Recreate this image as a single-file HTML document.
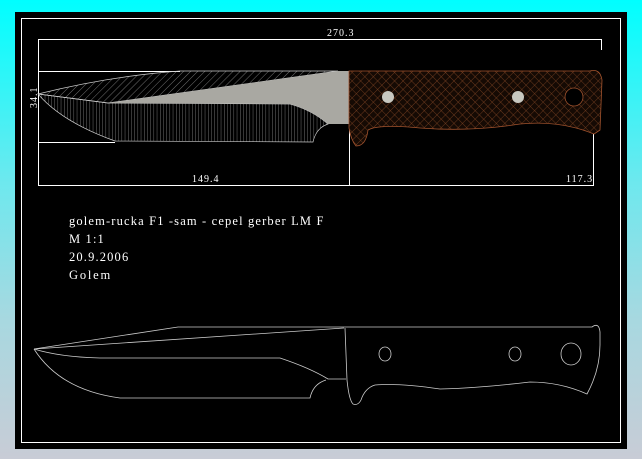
<!DOCTYPE html>
<html><head><meta charset="utf-8"><style>
html,body{margin:0;padding:0;width:642px;height:459px;overflow:hidden;background:linear-gradient(#00ffff 0%,#6ee8ee 40%,#a8d8e0 70%,#c8ccd6 100%);}
svg{position:absolute;left:0;top:0}
text{font-family:"Liberation Serif",serif;fill:#fff}
</style></head><body>
<svg width="642" height="459" viewBox="0 0 642 459">
<defs>
<pattern id="diag" width="5" height="5" patternUnits="userSpaceOnUse" patternTransform="rotate(45)">
<line x1="0" y1="0" x2="0" y2="5" stroke="#bbb" stroke-width="0.6"/></pattern>
<pattern id="vert" width="3.2" height="5" patternUnits="userSpaceOnUse">
<line x1="0" y1="0" x2="0" y2="5" stroke="#bbb" stroke-width="0.6"/></pattern>
<pattern id="cross" width="6" height="6" patternUnits="userSpaceOnUse" patternTransform="rotate(45)">
<rect width="6" height="6" fill="#150a04"/>
<line x1="0" y1="0" x2="0" y2="6" stroke="#8a4a26" stroke-width="0.7"/>
<line x1="0" y1="0" x2="6" y2="0" stroke="#8a4a26" stroke-width="0.7"/></pattern>
</defs>
<rect x="15" y="12" width="612" height="437" fill="#000"/>
<rect x="21.5" y="18.5" width="599" height="424" fill="none" stroke="#fff" stroke-width="1"/>
<g stroke="#fff" stroke-width="1" fill="none">
<line x1="38" y1="39.5" x2="602" y2="39.5"/>
<line x1="38.5" y1="39" x2="38.5" y2="186"/>
<line x1="601.5" y1="39" x2="601.5" y2="50"/>
<line x1="38" y1="185.5" x2="593" y2="185.5"/>
<line x1="349.5" y1="130" x2="349.5" y2="186"/>
<line x1="593.5" y1="130" x2="593.5" y2="186"/>
<line x1="38" y1="71.5" x2="180" y2="71.5"/>
<line x1="38" y1="142.5" x2="115" y2="142.5"/>
</g>
<text x="327" y="36" font-size="10" letter-spacing="1">270.3</text>
<text x="192" y="182" font-size="10" letter-spacing="1">149.4</text>
<text x="566" y="182" font-size="10" letter-spacing="1">117.3</text>
<text x="37" y="108" font-size="10" letter-spacing="1" transform="rotate(-90 37 108)">34.1</text>
<path d="M38,94 Q110,76 180,71 L338,71 L108,103 Z" fill="url(#diag)" stroke="#ccc" stroke-width="0.7"/>
<path d="M38,94 L108,103 L290,104 Q312,110 328,124 Q316,128 313,142 L115,141 Q62,122 38,94 Z" fill="url(#vert)" stroke="#ccc" stroke-width="0.7"/>
<path d="M108,103 L338,71 L349,71 L349,124 L328,124 Q312,110 290,104 Z" fill="#a9a8a2"/>
<path d="M349,71 L590,71 Q600,68 602,80 L600,130 L594,134 Q560,120 520,124 Q470,132 420,128 Q378,124 368,130 Q366,146 356,146 Q351,140 349,128 Z" fill="url(#cross)" stroke="#a0522d" stroke-width="0.8"/>
<circle cx="388" cy="97" r="6" fill="#c8c8c0"/>
<circle cx="518" cy="97" r="6" fill="#c8c8c0"/>
<circle cx="574" cy="97" r="9" fill="#000" stroke="#a0522d" stroke-width="0.8"/>
<text x="69" y="225" font-size="12.5" letter-spacing="1.15">golem-rucka F1 -sam - cepel gerber LM F</text>
<text x="69" y="243" font-size="12.5" letter-spacing="1.15">M  1:1</text>
<text x="69" y="261" font-size="12.5" letter-spacing="1.15">20.9.2006</text>
<text x="69" y="279" font-size="12.5" letter-spacing="1.8">Golem</text>
<g stroke="#ccc" stroke-width="0.8" fill="none">
<path d="M34,349 L178,327 L592,327 Q599,322 600,332 L600,345 Q600,370 587,394 Q560,382 530,382 Q480,388 440,389 Q400,383 375,385 Q365,388 361,400 Q358,406 353,404 Q349,400 347,380 L345,328"/>
<path d="M34,349 L344,328"/>
<path d="M34,349 Q60,357 100,358 L280,358 Q310,368 328,379 L346,379"/>
<path d="M34,349 Q60,390 120,398 L310,398 Q313,384 326,380"/>
<ellipse cx="385" cy="354" rx="6" ry="7"/>
<ellipse cx="515" cy="354" rx="6" ry="7"/>
<ellipse cx="571" cy="354" rx="10" ry="11"/>
</g>
</svg>
</body></html>
